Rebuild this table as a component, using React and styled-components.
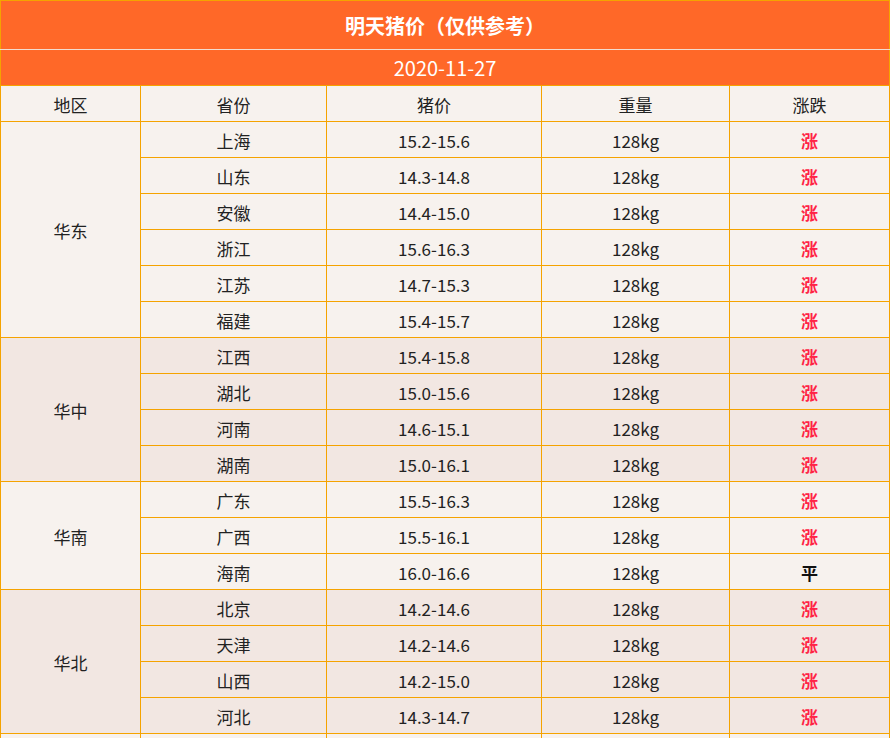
import React from "react";
import styled, { createGlobalStyle } from "styled-components";

const Global = createGlobalStyle`
  html, body { margin: 0; padding: 0; overflow: hidden; background: #fff; }
  body { font-family: "Noto Sans CJK SC", "Noto Sans", sans-serif; }
`;

const Table = styled.table`
  width: 889px;
  border-collapse: collapse;
  table-layout: fixed;
  border: 1px solid #f5a300;
  font-size: 17px;
  color: #222;
`;

const TitleCell = styled.th`
  background: #ff6828;
  color: #fff;
  height: ${(p) => p.$h}px;
  padding: 0;
  font-size: 20px;
  font-weight: ${(p) => (p.$bold ? 700 : 400)};
  border: 1px solid #f5a300;
  border-bottom: 1px solid ${(p) => (p.$light ? "#f2dccf" : "#f5a300")};
  text-align: center;
  vertical-align: middle;
  box-sizing: border-box;
`;

const HeadCell = styled.th`
  font-weight: 400;
  background: #f7f2ee;
  height: 34px;
  padding: 1px 0 0;
  border: 1px solid #f5a300;
  text-align: center;
`;

const Cell = styled.td`
  background: ${(p) => (p.$alt ? "#f2e7e2" : "#f7f2ee")};
  height: 33px;
  padding: 2px 0 0;
  border: 1px solid #f5a300;
  text-align: center;
  vertical-align: middle;
`;

const Trend = styled.span`
  font-weight: 700;
  color: ${(p) => (p.$up ? "#ff2445" : "#111")};
`;

const groups = [
  {
    name: "华东",
    rows: [
      ["上海", "15.2-15.6", "涨"],
      ["山东", "14.3-14.8", "涨"],
      ["安徽", "14.4-15.0", "涨"],
      ["浙江", "15.6-16.3", "涨"],
      ["江苏", "14.7-15.3", "涨"],
      ["福建", "15.4-15.7", "涨"],
    ],
  },
  {
    name: "华中",
    rows: [
      ["江西", "15.4-15.8", "涨"],
      ["湖北", "15.0-15.6", "涨"],
      ["河南", "14.6-15.1", "涨"],
      ["湖南", "15.0-16.1", "涨"],
    ],
  },
  {
    name: "华南",
    rows: [
      ["广东", "15.5-16.3", "涨"],
      ["广西", "15.5-16.1", "涨"],
      ["海南", "16.0-16.6", "平"],
    ],
  },
  {
    name: "华北",
    rows: [
      ["北京", "14.2-14.6", "涨"],
      ["天津", "14.2-14.6", "涨"],
      ["山西", "14.2-15.0", "涨"],
      ["河北", "14.3-14.7", "涨"],
    ],
  },
  {
    name: "东北",
    rows: [
      ["辽宁", "13.6-14.0", "涨"],
      ["吉林", "13.4-13.9", "涨"],
      ["黑龙江", "13.2-13.6", "涨"],
    ],
  },
];

export default function App() {
  return (
    <>
      <Global />
      <Table>
        <colgroup>
          <col style={{ width: 140 }} />
          <col style={{ width: 186 }} />
          <col style={{ width: 215 }} />
          <col style={{ width: 188 }} />
          <col style={{ width: 160 }} />
        </colgroup>
        <thead>
          <tr>
            <TitleCell colSpan={5} $h={49} $bold $light>
              明天猪价（仅供参考）
            </TitleCell>
          </tr>
          <tr>
            <TitleCell colSpan={5} $h={36}>
              2020-11-27
            </TitleCell>
          </tr>
          <tr>
            <HeadCell>地区</HeadCell>
            <HeadCell>省份</HeadCell>
            <HeadCell>猪价</HeadCell>
            <HeadCell>重量</HeadCell>
            <HeadCell>涨跌</HeadCell>
          </tr>
        </thead>
        <tbody>
          {groups.map((g, gi) =>
            g.rows.map((r, ri) => (
              <tr key={g.name + ri}>
                {ri === 0 && (
                  <Cell rowSpan={g.rows.length} $alt={gi % 2 === 1}>
                    {g.name}
                  </Cell>
                )}
                <Cell $alt={gi % 2 === 1}>{r[0]}</Cell>
                <Cell $alt={gi % 2 === 1}>{r[1]}</Cell>
                <Cell $alt={gi % 2 === 1}>128kg</Cell>
                <Cell $alt={gi % 2 === 1}>
                  <Trend $up={r[2] === "涨"}>{r[2]}</Trend>
                </Cell>
              </tr>
            ))
          )}
        </tbody>
      </Table>
    </>
  );
}
